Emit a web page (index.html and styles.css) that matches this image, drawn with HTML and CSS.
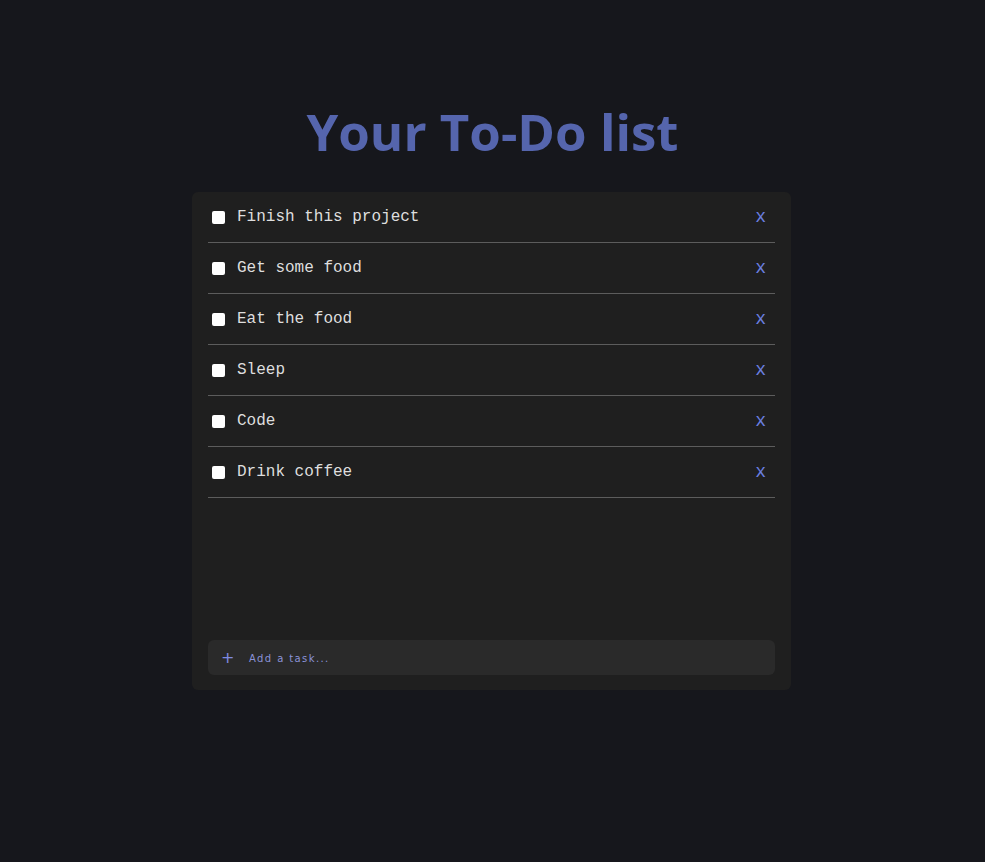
FILE: index.html
```html
<!DOCTYPE html>
<html lang="en">
<head>
<meta charset="utf-8">
<title>To-Do</title>
<link rel="stylesheet" href="styles.css">
</head>
<body>
<main class="page">
  <h1 class="title">Your To-Do list</h1>
  <section class="card">
    <ul class="list">
      <li class="item"><input type="checkbox" class="check"><span class="label">Finish this project</span><button class="remove">x</button></li>
      <li class="item"><input type="checkbox" class="check"><span class="label">Get some food</span><button class="remove">x</button></li>
      <li class="item"><input type="checkbox" class="check"><span class="label">Eat the food</span><button class="remove">x</button></li>
      <li class="item"><input type="checkbox" class="check"><span class="label">Sleep</span><button class="remove">x</button></li>
      <li class="item"><input type="checkbox" class="check"><span class="label">Code</span><button class="remove">x</button></li>
      <li class="item"><input type="checkbox" class="check"><span class="label">Drink coffee</span><button class="remove">x</button></li>
    </ul>
    <div class="add">
      <span class="plus">+</span>
      <span class="placeholder">Add a task...</span>
    </div>
  </section>
</main>
</body>
</html>
```

FILE: styles.css
```css
html, body {
  margin: 0;
  padding: 0;
  background: #16171c;
  height: 100%;
}
.page {
  display: flex;
  flex-direction: column;
  align-items: center;
  padding-top: 99px;
}
.title {
  margin: 0 0 29px 0;
  font-family: "Open Sans", sans-serif;
  font-weight: 700;
  font-size: 51px;
  line-height: 64px;
  color: #5565ad;
}
.card {
  width: 599px;
  box-sizing: border-box;
  background: #1f1f1f;
  border-radius: 6px;
  padding: 0 16px 15px 16px;
  margin-right: 2px;
  display: flex;
  flex-direction: column;
}
.list {
  list-style: none;
  margin: 0;
  padding: 0;
  height: 448px;
}
.item {
  display: flex;
  align-items: center;
  height: 50px;
  border-bottom: 1px solid #5c5c5c;
}
.check {
  width: 13px;
  height: 13px;
  margin: 0 0 0 4px;
  appearance: none;
  background: #ffffff;
  border-radius: 2px;
}
.label {
  flex: 1;
  margin-left: 12px;
  font-family: "Liberation Mono", monospace;
  font-size: 16px;
  color: #dedede;
}
.remove {
  background: none;
  border: 0;
  padding: 0;
  margin-right: 9px;
  font-family: "Liberation Mono", monospace;
  font-size: 18px;
  color: #6b7fe0;
  cursor: pointer;
}
.add {
  display: flex;
  align-items: center;
  height: 35px;
  background: #2a2a2a;
  border-radius: 6px;
  padding-left: 13px;
}
.plus {
  font-family: "DejaVu Sans", sans-serif;
  font-size: 16px;
  color: #7f8ae0;
  width: 28px;
}
.placeholder {
  font-family: "DejaVu Sans", sans-serif;
  font-size: 10px;
  letter-spacing: 1.4px;
  color: #8a93d8;
  padding-top: 2px;
}
```
